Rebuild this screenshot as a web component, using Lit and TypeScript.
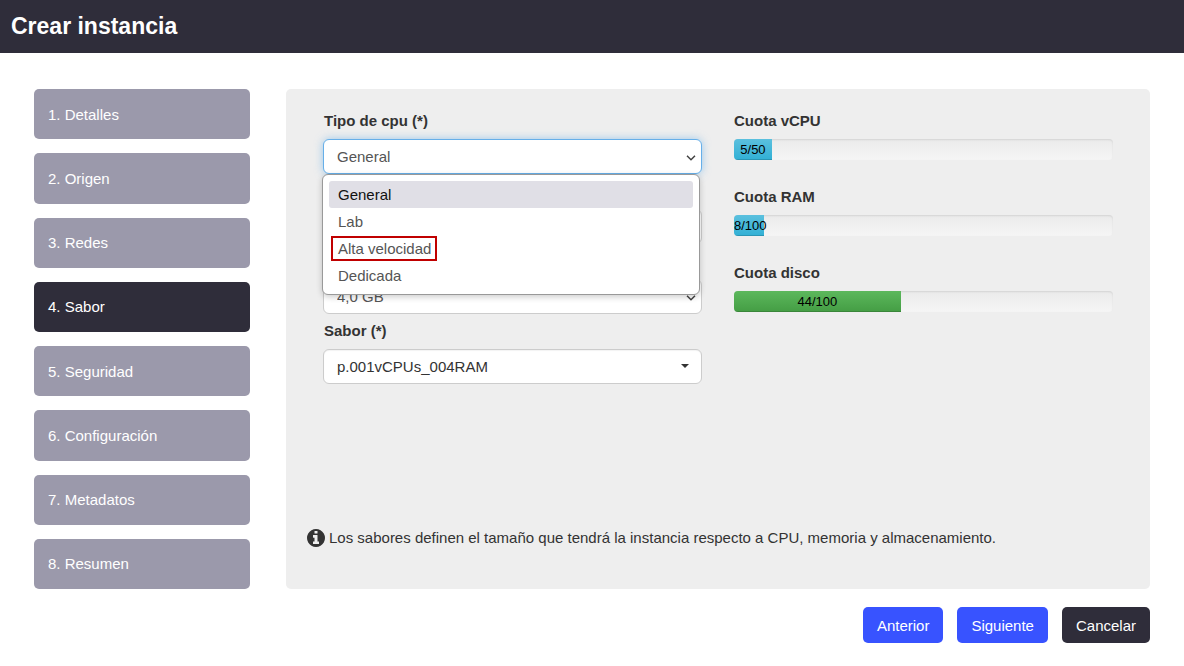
import { LitElement, html, css, svg } from "lit";
import { customElement, property, state } from "lit/decorators.js";
import { classMap } from "lit/directives/class-map.js";
import { styleMap } from "lit/directives/style-map.js";

const STEPS = [
  "Detalles",
  "Origen",
  "Redes",
  "Sabor",
  "Seguridad",
  "Configuración",
  "Metadatos",
  "Resumen",
];

const CPU_TYPES = ["General", "Lab", "Alta velocidad", "Dedicada"];

const infoIcon = svg`<path d="M1152 1376v-160q0-14-9-23t-23-9h-96v-512q0-14-9-23t-23-9h-320q-14 0-23 9t-9 23v160q0 14 9 23t23 9h96v320h-96q-14 0-23 9t-9 23v160q0 14 9 23t23 9h448q14 0 23-9t9-23zm-128-896v-160q0-14-9-23t-23-9h-192q-14 0-23 9t-9 23v160q0 14 9 23t23 9h192q14 0 23-9t9-23zm640 416q0 209-103 385.5t-279.5 279.5-385.5 103-385.5-103-279.5-279.5-103-385.5 103-385.5 279.5-279.5 385.5-103 385.5 103 279.5 279.5 103 385.5z"/>`;

@customElement("quota-bar")
export class QuotaBar extends LitElement {
  @property() label = "";
  @property({ type: Number }) used = 0;
  @property({ type: Number }) total = 100;
  @property() tone: "info" | "success" = "info";

  static styles = css`
    :host {
      display: block;
    }
    .label {
      margin-bottom: 8px;
      font-weight: bold;
      line-height: 20px;
      color: #333;
    }
    .track {
      display: flex;
      height: 21px;
      overflow: hidden;
      border-radius: 4px;
      background: linear-gradient(#ebebeb, #f5f5f5);
      box-shadow: inset 0 1px 2px rgba(0, 0, 0, 0.1);
    }
    .fill {
      color: #000;
      font-size: 13px;
      line-height: 21px;
      text-align: center;
      box-shadow: inset 0 -1px 0 rgba(0, 0, 0, 0.15);
    }
    .info {
      background: linear-gradient(#5bc0de, #31b0d5);
    }
    .success {
      background: linear-gradient(#5cb85c, #449d44);
    }
  `;

  render() {
    const width = `${(this.used / this.total) * 100}%`;
    return html`
      <div class="label" id="label">${this.label}</div>
      <div
        class="track"
        role="progressbar"
        aria-labelledby="label"
        aria-valuenow=${this.used}
        aria-valuemax=${this.total}
      >
        <div
          class=${classMap({ fill: true, [this.tone]: true })}
          style=${styleMap({ width })}
        >
          ${this.used}/${this.total}
        </div>
      </div>
    `;
  }
}

@customElement("app-root")
export class AppRoot extends LitElement {
  @state() private step = 3;
  @state() private cpuType = "General";
  @state() private menuOpen = true;

  static styles = css`
    :host {
      display: block;
      font-family: "Liberation Sans", Arial, sans-serif;
      font-size: 15px;
      line-height: 21px;
      color: #333;
    }
    * {
      box-sizing: border-box;
    }
    button,
    select {
      font: inherit;
      cursor: pointer;
    }
    .header {
      padding: 11px;
      background: #2f2d3a;
      color: #fff;
    }
    .title {
      margin: 0;
      font-size: 23px;
      line-height: 31px;
      font-weight: bold;
    }
    .wizard {
      display: grid;
      grid-template-columns: 1fr 4fr;
      column-gap: 36px;
      row-gap: 18px;
      padding: 36px 34px 20px;
    }
    .steps {
      display: flex;
      flex-direction: column;
      gap: 14px;
    }
    .step {
      flex: 1;
      padding: 14px;
      border: 0;
      border-radius: 5px;
      background: #9b99ab;
      color: #fff;
      text-align: left;
    }
    .step.current {
      background: #2f2d3a;
    }
    .panel {
      display: flex;
      flex-direction: column;
      min-height: 500px;
      padding: 22px 21px 41px;
      border-radius: 5px;
      background: #eee;
    }
    .columns {
      display: grid;
      grid-template-columns: 1fr 1fr;
      gap: 32px;
      padding: 0 16px;
    }
    .fields {
      display: flex;
      flex-direction: column;
      gap: 7px;
    }
    .quotas {
      display: flex;
      flex-direction: column;
      gap: 27px;
    }
    .field {
      display: flex;
      flex-direction: column;
      justify-content: flex-end;
      gap: 8px;
      min-height: 63px;
    }
    .field label {
      padding-left: 1px;
      font-weight: bold;
      line-height: 20px;
    }
    .control {
      position: relative;
      display: flex;
    }
    .select {
      width: 100%;
      height: 35px;
      padding: 0 28px 0 13px;
      appearance: none;
      border: 1px solid #ccc;
      border-radius: 6px;
      outline: none;
      color: #555;
      background: #fff
        url("data:image/svg+xml,%3Csvg xmlns='http://www.w3.org/2000/svg' width='10' height='6'%3E%3Cpath d='M1 .75 5 4.75 9 .75' fill='none' stroke='%23444' stroke-width='1.5'/%3E%3C/svg%3E")
        no-repeat right 5px top 15px;
      box-shadow: inset 0 1px 1px rgba(0, 0, 0, 0.05);
    }
    .select.open {
      border-color: #66afe9;
      box-shadow: 0 0 8px rgba(102, 175, 233, 0.6);
    }
    .select.caret {
      color: #333;
      background-image: url("data:image/svg+xml,%3Csvg xmlns='http://www.w3.org/2000/svg' width='8' height='4'%3E%3Cpath d='M0 0h8L4 4z' fill='%23333'/%3E%3C/svg%3E");
      background-position: right 12px top 14px;
    }
    .menu {
      position: absolute;
      z-index: 2;
      top: 100%;
      left: -1px;
      right: 2px;
      margin: 0;
      padding: 6px 6px 5px;
      list-style: none;
      border: 1px solid #999;
      border-radius: 6px;
      background: #fff;
      box-shadow: 0 2px 6px rgba(0, 0, 0, 0.2);
    }
    .option {
      padding: 3px 9px;
      border-radius: 3px;
      color: #555;
      cursor: pointer;
    }
    .option.selected {
      background: #e0dfe6;
      color: #111;
    }
    .marked {
      display: inline-block;
      margin: 0 -5px;
      padding: 0 4px 0 5px;
      outline: 2px solid #c00000;
    }
    .hint {
      display: flex;
      align-items: center;
      gap: 4px;
      margin: auto 0 0;
    }
    .icon {
      flex: none;
      width: 18px;
      height: 18px;
      fill: #333;
    }
    .actions {
      grid-column: 2;
      display: flex;
      justify-content: flex-end;
      gap: 14px;
    }
    .action {
      height: 36px;
      padding: 0 14px;
      border: 0;
      border-radius: 5px;
      background: #3853ff;
      color: #fff;
    }
    .action.cancel {
      background: #2f2d3a;
    }
  `;

  private pick(type: string) {
    this.cpuType = type;
    this.menuOpen = false;
  }

  private toggleMenu(event: Event) {
    event.preventDefault();
    this.menuOpen = !this.menuOpen;
  }

  private renderMenu() {
    return html`
      <ul class="menu" role="listbox" aria-label="Tipo de cpu">
        ${CPU_TYPES.map(
          (type) => html`
            <li
              class=${classMap({ option: true, selected: type === this.cpuType })}
              role="option"
              aria-selected=${type === this.cpuType}
              @click=${() => this.pick(type)}
            >
              <span class=${classMap({ marked: type === "Alta velocidad" })}>${type}</span>
            </li>
          `
        )}
      </ul>
    `;
  }

  render() {
    return html`
      <header class="header"><h1 class="title">Crear instancia</h1></header>
      <main class="wizard">
        <nav class="steps">
          ${STEPS.map(
            (name, i) => html`
              <button
                class=${classMap({ step: true, current: i === this.step })}
                @click=${() => (this.step = i)}
              >
                ${i + 1}. ${name}
              </button>
            `
          )}
        </nav>
        <section class="panel">
          <div class="columns">
            <div class="fields">
              <div class="field">
                <label for="cpu">Tipo de cpu (*)</label>
                <div class="control">
                  <select
                    id="cpu"
                    class=${classMap({ select: true, open: this.menuOpen })}
                    .value=${this.cpuType}
                    @mousedown=${this.toggleMenu}
                  >
                    ${CPU_TYPES.map((type) => html`<option>${type}</option>`)}
                  </select>
                  ${this.menuOpen ? this.renderMenu() : null}
                </div>
              </div>
              <div class="field">
                <select class="select" aria-label="vCPU"></select>
              </div>
              <div class="field">
                <select class="select" aria-label="RAM"><option>4,0 GB</option></select>
              </div>
              <div class="field">
                <label for="flavor">Sabor (*)</label>
                <select id="flavor" class="select caret">
                  <option>p.001vCPUs_004RAM</option>
                </select>
              </div>
            </div>
            <div class="quotas">
              <quota-bar label="Cuota vCPU" .used=${5} .total=${50}></quota-bar>
              <quota-bar label="Cuota RAM" .used=${8} .total=${100}></quota-bar>
              <quota-bar label="Cuota disco" .used=${44} .total=${100} tone="success"></quota-bar>
            </div>
          </div>
          <p class="hint">
            <svg class="icon" viewBox="128 128 1536 1536" aria-hidden="true">${infoIcon}</svg>
            Los sabores definen el tamaño que tendrá la instancia respecto a CPU, memoria y
            almacenamiento.
          </p>
        </section>
        <div class="actions">
          <button class="action">Anterior</button>
          <button class="action">Siguiente</button>
          <button class="action cancel">Cancelar</button>
        </div>
      </main>
    `;
  }
}
